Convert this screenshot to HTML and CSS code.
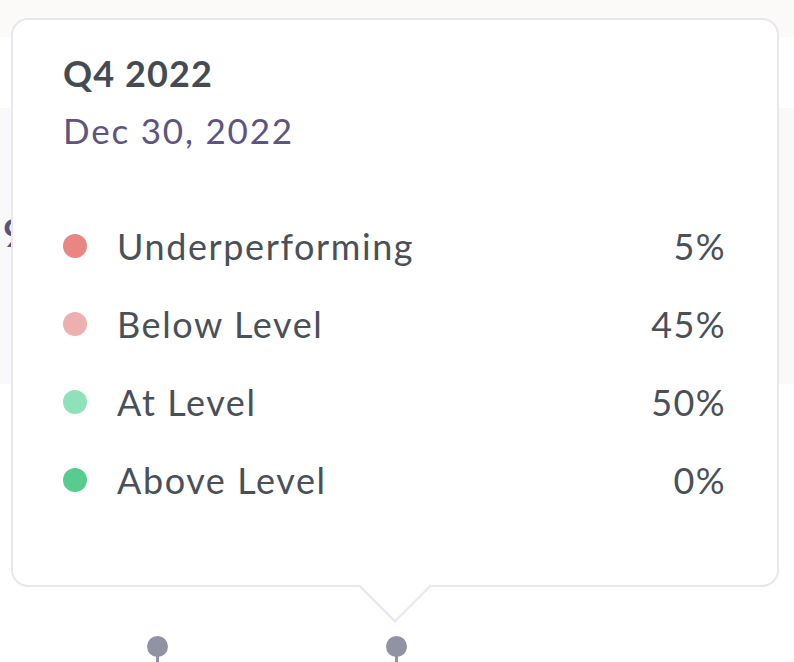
FILE: index.html
```html
<!DOCTYPE html>
<html>
<head>
<meta charset="utf-8">
<link rel="stylesheet" href="styles.css">
</head>
<body>
<div class="page">
  <div class="topband"></div>
  <div class="panel"><span class="panel-value">9</span></div>
  <div class="chart">
    <span class="point" style="left:147px"></span>
    <span class="point" style="left:386px"></span>
  </div>

  <div class="tooltip">
    <div class="tt-title">Q4 2022</div>
    <div class="tt-date">Dec 30, 2022</div>
    <ul class="tt-list">
      <li class="tt-row"><span class="dot dot-under"></span><span class="tt-label">Underperforming</span><span class="tt-val">5%</span></li>
      <li class="tt-row"><span class="dot dot-below"></span><span class="tt-label">Below Level</span><span class="tt-val">45%</span></li>
      <li class="tt-row"><span class="dot dot-at"></span><span class="tt-label">At Level</span><span class="tt-val">50%</span></li>
      <li class="tt-row"><span class="dot dot-above"></span><span class="tt-label">Above Level</span><span class="tt-val">0%</span></li>
    </ul>
    <span class="tt-arrow"></span>
  </div>
</div>
</body>
</html>
```
FILE: styles.css
```css
html, body {
  margin: 0;
  padding: 0;
  background: #ffffff;
}
body {
  font-family: "Lato", "Liberation Sans", sans-serif;
  width: 794px;
  height: 662px;
  overflow: hidden;
}
.page {
  position: relative;
  width: 794px;
  height: 662px;
  display: flex;
  flex-direction: column;
}
.topband {
  height: 37px;
  background: #fbfaf8;
}
.panel {
  margin-top: 71px;
  height: 276px;
  background: #faf9f9;
  padding: 104px 0 0 3px;
  box-sizing: border-box;
}
.panel-value {
  font-size: 38px;
  font-weight: 700;
  color: #5b5080;
  line-height: 40px;
}
.chart {
  position: relative;
  flex: 1;
}
.point {
  position: absolute;
  top: 252px;
  width: 21px;
  height: 21px;
  border-radius: 50%;
  background: #8f93a3;
}
.point::after {
  content: "";
  position: absolute;
  left: 9px;
  top: 20px;
  width: 3px;
  height: 10px;
  background: #8f93a3;
}

.tooltip {
  position: absolute;
  left: 11px;
  top: 18px;
  width: 768px;
  box-sizing: border-box;
  background: #ffffff;
  border: 2px solid #e7e8ef;
  border-radius: 17px;
  padding: 31px 52px 66px 50px;
  color: #495058;
}
.tt-title {
  font-size: 36px;
  line-height: 44px;
  font-weight: 700;
  color: #454b53;
  letter-spacing: 1.1px;
}
.tt-date {
  margin-top: 14px;
  font-size: 35px;
  line-height: 42px;
  color: #5e5480;
  letter-spacing: 1.8px;
}
.tt-list {
  list-style: none;
  margin: 56px 0 0 0;
  padding: 0;
}
.tt-row {
  display: flex;
  align-items: center;
  height: 78px;
  font-size: 36px;
  line-height: 44px;
}
.dot {
  width: 24px;
  height: 24px;
  border-radius: 50%;
  flex: none;
  margin-right: 30px;
}
.dot-under { background: #e98582; }
.dot-below { background: #ecb0ae; }
.dot-at { background: #8fe1b9; }
.dot-above { background: #57cc8e; }
.tt-label {
  flex: 1;
  letter-spacing: 1.6px;
}
.tt-val {
  letter-spacing: 1.4px;
  margin-right: -1px;
}
.tt-arrow {
  position: absolute;
  left: calc(50% - 26px);
  bottom: -27px;
  width: 52px;
  height: 52px;
  box-sizing: border-box;
  background: #ffffff;
  border-right: 2px solid #e7e8ef;
  border-bottom: 2px solid #e7e8ef;
  transform: rotate(45deg);
}
```
